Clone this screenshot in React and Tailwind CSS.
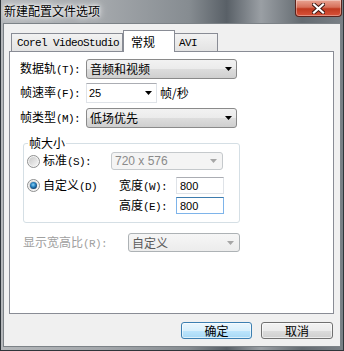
import React from "react";

const cjk = "font-['Noto_Sans_CJK_SC',sans-serif]";

// mnemonic part of a label, e.g. "(T):" — SimSun-like fixed width
const Key = ({ children }) => (
  <span className="font-['Liberation_Mono',monospace] text-[11px] tracking-[-0.6px]">
    {children}
  </span>
);

const Arrow = ({ color = "#000" }) => (
  <svg width="7" height="4" viewBox="0 0 7 4" className="shrink-0">
    <path d="M0 0H7L3.5 4Z" fill={color} />
  </svg>
);

const Radio = ({ checked }) => (
  <svg width="13" height="13" viewBox="0 0 13 13" className="shrink-0">
    <defs>
      <linearGradient id="rb" x1="0" y1="0" x2="1" y2="1">
        <stop offset="0" stopColor="#c9c9c9" />
        <stop offset="1" stopColor="#f6f6f6" />
      </linearGradient>
      <radialGradient id="rd" cx="0.45" cy="0.4" r="0.6">
        <stop offset="0" stopColor="#8fd2f5" />
        <stop offset="0.5" stopColor="#2a86c4" />
        <stop offset="1" stopColor="#0f3e6e" />
      </radialGradient>
    </defs>
    <circle cx="6.5" cy="6.5" r="6" fill="#f4f4f4" stroke="#8e8f8f" />
    <circle cx="6.5" cy="6.5" r="4.5" fill="url(#rb)" />
    {checked && <circle cx="6.5" cy="6.5" r="3.5" fill="url(#rd)" />}
  </svg>
);

const Combo = ({ text, className }) => (
  <div
    className={`flex items-center justify-between rounded-[3px] border border-[#8a8a8a] bg-[linear-gradient(#f2f2f2_0%,#ebebeb_50%,#dddddd_50%,#cfcfcf_100%)] pl-[3px] pr-[4px] ${className}`}
  >
    <span className={`${cjk} text-[12px] leading-[14px] text-black`}>{text}</span>
    <Arrow />
  </div>
);

const App = () => {
  return (
    <div className="flex h-[351px] w-[344px] flex-col overflow-hidden border-x border-b border-[#2f353a] bg-[linear-gradient(to_right,#b4b7ba_0%,#a3a7ab_30%,#868c91_55%,#596067_66%,#9a9fa4_76%,#646b71_88%,#7a8086_100%)]">
      {/* title bar */}
      <div className="flex h-[23px] shrink-0 items-start justify-between">
        <span
          className={`${cjk} mt-[4px] ml-[3px] text-[12px] leading-[14px] text-black [text-shadow:0_0_6px_#fff,0_0_3px_#fff,0_0_10px_#fff]`}
        >
          新建配置文件选项
        </span>
        <div className="mr-[1px] flex h-[17px] w-[47px] items-center justify-center rounded-b-[4px] border-x border-b border-[#5a231c] bg-[linear-gradient(#e9a493_0%,#d7705a_45%,#c0391f_55%,#d8533a_100%)] shadow-[inset_0_0_0_1px_rgba(255,255,255,0.35)]">
          <svg width="13" height="11" viewBox="0 0 13 11">
            <path d="M2 1.5L11 9.5M11 1.5L2 9.5" stroke="#3b1510" strokeWidth="4" strokeLinecap="square" />
            <path d="M2 1.5L11 9.5M11 1.5L2 9.5" stroke="#fff" strokeWidth="2.2" strokeLinecap="square" />
          </svg>
        </div>
      </div>

      {/* client area */}
      <div className="mx-[2px] mb-[3px] flex flex-1 flex-col border border-[#7c8287] bg-[#f0f0f0] pt-[7px] pr-[6px] pl-[5px]">
        {/* tabs */}
        <div className="flex h-[20px] items-end pl-[2px]">
          <div className="flex h-[18px] w-[112px] items-center border-x border-t border-[#898c95] bg-[linear-gradient(#f2f2f2,#e3e3e3)] pl-[5px]">
            <span className="font-['Liberation_Mono',monospace] text-[11px] leading-[14px] tracking-[-0.6px] text-black">
              Corel VideoStudio
            </span>
          </div>
          <div className="relative z-10 -mb-px flex h-[22px] w-[52px] items-start border-x border-t border-[#898c95] bg-white pt-[4px] pl-[7px]">
            <span className={`${cjk} text-[12px] leading-[14px] text-black`}>常规</span>
          </div>
          <div className="flex h-[18px] w-[43px] items-center border-t border-r border-[#898c95] bg-[linear-gradient(#f2f2f2,#e3e3e3)] pl-[4px]">
            <span className="font-['Liberation_Mono',monospace] text-[11px] leading-[14px] tracking-[-0.6px] text-black">
              AVI
            </span>
          </div>
        </div>

        {/* tab panel */}
        <div className={`${cjk} flex h-[263px] w-[325px] flex-col border border-[#898c95] bg-white pt-[7px] pl-[10px] text-[12px] leading-[14px] text-black`}>
          <div className="flex h-[20px] items-center">
            <span className="w-[66px]">
              数据轨<Key>(T):</Key>
            </span>
            <Combo text="音频和视频" className="h-[20px] w-[151px]" />
          </div>

          <div className="mt-[4px] flex h-[20px] items-center">
            <span className="w-[66px]">
              帧速率<Key>(F):</Key>
            </span>
            <div className="flex h-[20px] w-[71px] items-center justify-between border border-[#dfe3e8] border-t-[#abadb3] bg-white pl-[2px] pr-[4px]">
              <span className="font-['Liberation_Sans',sans-serif] text-[11px]">25</span>
              <Arrow />
            </div>
            <span className="ml-[3px]">帧/秒</span>
          </div>

          <div className="mt-[5px] flex h-[20px] items-center">
            <span className="w-[66px]">
              帧类型<Key>(M):</Key>
            </span>
            <Combo text="低场优先" className="h-[20px] w-[151px]" />
          </div>

          {/* frame size group */}
          <fieldset className="mt-[8px] ml-[3px] w-[217px] rounded-[3px] border border-[#d5dfe5] pb-[8px]">
            <legend className="ml-[4px] px-[1px] leading-[14px]">帧大小</legend>

            <div className="mt-[2px] flex h-[18px] items-center pl-[3px]">
              <div className="flex w-[84px] items-center gap-[3px]">
                <Radio />
                <span>
                  标准<Key>(S):</Key>
                </span>
              </div>
              <div className="flex h-[18px] w-[112px] items-center justify-between rounded-[3px] border border-[#c5c9cc] bg-[#f4f4f4] pl-[3px] pr-[5px]">
                <span className="font-['Liberation_Sans',sans-serif] text-[12px] text-[#8a8a8a]">
                  720 x 576
                </span>
                <Arrow color="#a6a6a6" />
              </div>
            </div>

            <div className="mt-[7px] flex h-[17px] items-center pl-[3px]">
              <div className="flex w-[92px] items-center gap-[3px]">
                <Radio checked />
                <span>
                  自定义<Key>(D)</Key>
                </span>
              </div>
              <span className="w-[57px]">
                宽度<Key>(W):</Key>
              </span>
              <div className="flex h-[17px] w-[48px] items-center border border-[#dfe3e8] border-t-[#abadb3] bg-white pl-[3px]">
                <span className="font-['Liberation_Sans',sans-serif] text-[11px]">800</span>
              </div>
            </div>

            <div className="mt-[3px] flex h-[17px] items-center pl-[3px]">
              <div className="w-[92px]" />
              <span className="w-[57px]">
                高度<Key>(E):</Key>
              </span>
              <div className="flex h-[17px] w-[48px] items-center border border-[#7eb4ea] border-t-[#3d7bad] bg-white pl-[3px]">
                <span className="font-['Liberation_Sans',sans-serif] text-[11px]">800</span>
              </div>
            </div>
          </fieldset>

          <div className="mt-[10px] flex h-[19px] items-center pl-[3px]">
            <span className="w-[105px] text-[#a0a0a0]">
              显示宽高比<Key>(R):</Key>
            </span>
            <div className="flex h-[19px] w-[112px] items-center justify-between rounded-[3px] border border-[#adb2b5] bg-[linear-gradient(#f6f6f6,#ececec)] pl-[3px] pr-[5px]">
              <span className="text-[#5a5a5a]">自定义</span>
              <Arrow color="#a6a6a6" />
            </div>
          </div>
        </div>

        {/* dialog buttons */}
        <div className={`${cjk} mt-[8px] flex justify-end gap-[9px] pr-[1px] text-[12px] leading-[14px] text-black`}>
          <button className="flex h-[17px] w-[71px] items-center justify-center rounded-[3px] border border-[#3c7fb1] bg-[linear-gradient(#eaf6fd_0%,#d9f0fc_50%,#bee6fd_50%,#a7d9f5_100%)] shadow-[inset_0_0_0_1px_rgba(255,255,255,0.6)]">
            确定
          </button>
          <button className="flex h-[17px] w-[72px] items-center justify-center rounded-[3px] border border-[#707070] bg-[linear-gradient(#f2f2f2_0%,#ebebeb_50%,#dddddd_50%,#cfcfcf_100%)] shadow-[inset_0_0_0_1px_rgba(255,255,255,0.6)]">
            取消
          </button>
        </div>
      </div>
    </div>
  );
};

export default App;
